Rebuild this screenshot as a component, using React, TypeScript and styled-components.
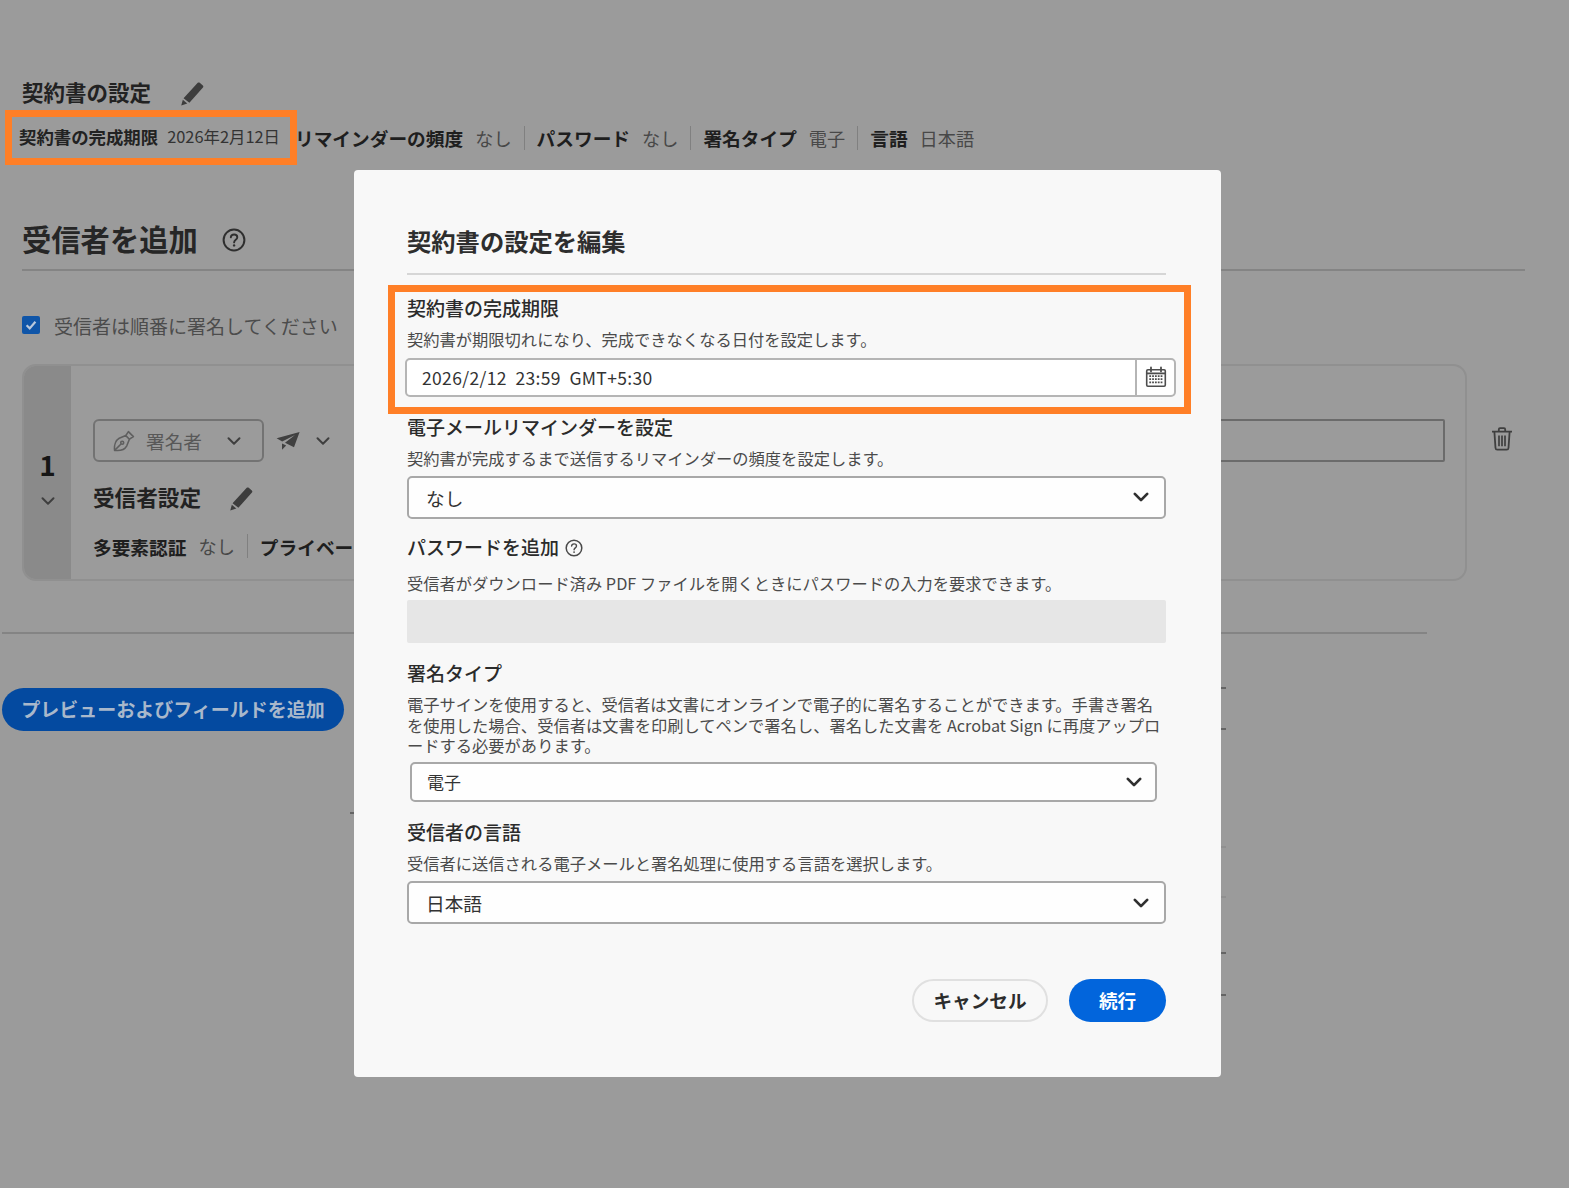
import React from "react";
import styled, { createGlobalStyle } from "styled-components";

const GlobalStyle = createGlobalStyle`
  html, body {
    margin: 0;
    padding: 0;
    background: #9b9b9b;
  }
  * {
    box-sizing: border-box;
  }
`;

const Page = styled.div`
  position: relative;
  width: 1569px;
  height: 1188px;
  overflow: hidden;
  padding-top: 79px;
  background: #9b9b9b;
  color: #1b1b1b;
  font-family: "Noto Sans CJK JP", "Noto Sans", sans-serif;
`;

/* ---------- dimmed page behind the dialog ---------- */

const TitleRow = styled.div`
  display: flex;
  align-items: center;
  height: 26px;
  margin-left: 22px;
  gap: 29px;
  svg {
    margin-top: 3px;
  }
`;
const SettingsTitle = styled.div`
  font-size: 21.5px;
  font-weight: 700;
  line-height: 26px;
  color: #222;
`;
const SummaryRow = styled.div`
  display: flex;
  align-items: center;
  height: 55px;
  margin: 5px 0 0 5px;
`;
const Highlight = styled.div`
  display: flex;
  align-items: center;
  width: 292px;
  height: 55px;
  margin-right: -2px;
  padding: 0 0 3px 7px;
  border: 7px solid #ff7f27;
  flex-shrink: 0;
`;
const HighlightKey = styled.span`
  font-size: 17.4px;
  font-weight: 700;
  color: #222;
  margin-right: 9px;
  white-space: nowrap;
`;
const HighlightValue = styled.span`
  font-size: 16.4px;
  color: #333;
  white-space: nowrap;
`;
const Pair = styled.div<{ $first?: boolean; $last?: boolean }>`
  display: flex;
  align-items: center;
  gap: 12px;
  padding: 0 12px 0 ${(p) => (p.$first ? 0 : 12)}px;
  height: 24px;
  border-right: 1px solid ${(p) => (p.$last ? "transparent" : "#808080")};
  white-space: nowrap;
`;
const PairKey = styled.span`
  font-size: 18.7px;
  font-weight: 700;
  color: #1e1e1e;
`;
const PairValue = styled.span`
  font-size: 18.2px;
  color: #484848;
`;
const SectionHead = styled.div`
  display: flex;
  align-items: center;
  gap: 24px;
  height: 44px;
  margin: 53px 0 0 22px;
`;
const SectionTitle = styled.h2`
  margin: 0;
  padding-bottom: 4px;
  font-size: 29.3px;
  font-weight: 700;
  color: #262626;
`;
const Rule = styled.div<{ $left: number; $width: number; $top: number }>`
  height: 2px;
  margin-top: ${(p) => p.$top}px;
  margin-left: ${(p) => p.$left}px;
  width: ${(p) => p.$width}px;
  background: #848484;
`;
const OrderRow = styled.label`
  display: flex;
  align-items: center;
  gap: 14px;
  margin: 35px 0 0 22px;
  height: 38px;
  font-size: 19px;
  color: #4c4c4c;
`;
const Check = styled.span`
  display: flex;
  align-items: center;
  justify-content: center;
  width: 18px;
  height: 18px;
  border-radius: 2px;
  background: #0f55a8;
`;
const RecipientRow = styled.div`
  display: flex;
  align-items: flex-start;
  margin: 20px 0 0 22px;
`;
const Card = styled.div`
  display: flex;
  width: 1445px;
  height: 217px;
  border: 2px solid #909090;
  border-radius: 14px;
  overflow: hidden;
`;
const NumberStrip = styled.div`
  display: flex;
  flex-direction: column;
  align-items: center;
  gap: 10px;
  width: 47px;
  padding-top: 79px;
  background: #8a8a8a;
  flex-shrink: 0;
`;
const StepNumber = styled.div`
  font-size: 28px;
  font-weight: 700;
  line-height: 38px;
  color: #161616;
`;
const CardBody = styled.div`
  flex: 1;
  padding: 53px 20px 0 22px;
`;
const RoleRow = styled.div`
  display: flex;
  align-items: center;
`;
const RoleSelect = styled.div`
  display: flex;
  align-items: center;
  width: 171px;
  height: 43px;
  padding: 0 20px 0 17px;
  border: 2px solid #737373;
  border-radius: 6px;
  font-size: 18.7px;
  color: #585858;
  flex-shrink: 0;
`;
const RoleLabel = styled.span`
  margin: 0 auto 0 11px;
`;
const DeliveryIcons = styled.div`
  display: flex;
  align-items: center;
  gap: 15px;
  margin-left: 12px;
  flex-shrink: 0;
`;
const EmailBox = styled.div`
  height: 43px;
  flex: 1;
  margin-left: 30px;
  border: 2px solid #6b6b6b;
  border-radius: 2px;
`;
const RecipientHead = styled.div`
  display: flex;
  align-items: center;
  gap: 28px;
  height: 32px;
  margin-top: 18px;
  svg {
    margin-top: 5px;
  }
`;
const RecipientTitle = styled.div`
  font-size: 21.6px;
  font-weight: 700;
  color: #222;
`;
const RecipientMeta = styled.div`
  display: flex;
  align-items: center;
  width: 261px;
  overflow: hidden;
  margin-top: 22px;
`;
const TrashBox = styled.div`
  margin: 63px 0 0 24px;
  line-height: 0;
`;
const PreviewButton = styled.button`
  display: block;
  width: 342px;
  height: 43px;
  margin: 54px 0 0 2px;
  padding: 0 0 3px;
  border: 0;
  border-radius: 22px;
  background: #044aa0;
  color: #a9b8cb;
  font: 700 19px "Noto Sans CJK JP", sans-serif;
`;
const Tick = styled.span<{ $x: number; $y: number; $faint?: boolean }>`
  position: absolute;
  left: ${(p) => p.$x}px;
  top: ${(p) => p.$y}px;
  width: 5px;
  height: 2px;
  background: ${(p) => (p.$faint ? "#909090" : "#656565")};
`;

/* ---------- dialog ---------- */

const Dialog = styled.div`
  position: absolute;
  left: 354px;
  top: 170px;
  width: 867px;
  height: 907px;
  padding: 53px 55px 0 53px;
  border-radius: 4px;
  background: #f8f8f8;
`;
const DialogTitle = styled.h1`
  margin: 0;
  height: 36px;
  font-size: 24.3px;
  font-weight: 700;
  line-height: 36px;
  color: #2e2e2e;
`;
const DialogRule = styled.div`
  height: 2px;
  margin-top: 14px;
  background: #d6d6d6;
`;
const FocusBox = styled.div`
  margin: 10px -25px 0 -19px;
  height: 129px;
  padding: 3px 8px 0 12px;
  border: 7px solid #ff7f27;
`;
const FieldLabel = styled.div<{ $top?: number }>`
  display: flex;
  align-items: center;
  gap: 6px;
  height: 26px;
  margin-top: ${(p) => p.$top ?? 0}px;
  font-size: 19px;
  font-weight: 500;
  line-height: 26px;
  color: #2b2b2b;
`;
const LabelHelp = styled.span`
  display: flex;
  margin: 3px 0 0 0;
`;
const FieldHelp = styled.div<{ $top?: number }>`
  margin-top: ${(p) => p.$top ?? 0}px;
  font-size: 16.27px;
  line-height: 20.5px;
  white-space: nowrap;
  color: #4b4b4b;
`;
const DateInput = styled.div`
  display: flex;
  align-items: stretch;
  height: 39px;
  margin: 8px 0 0 -2px;
  border: 2px solid #b5b5b5;
  border-radius: 5px;
  background: #fff;
`;
const DateText = styled.div`
  flex: 1;
  padding-left: 15px;
  font-size: 17.5px;
  line-height: 35px;
  letter-spacing: 0.35px;
  white-space: pre;
  color: #333;
`;
const CalendarCell = styled.div`
  display: flex;
  align-items: center;
  justify-content: center;
  width: 39px;
  border-left: 2px solid #b5b5b5;
`;
const Select = styled.div<{ $compact?: boolean; $top?: number }>`
  display: flex;
  align-items: center;
  justify-content: space-between;
  height: ${(p) => (p.$compact ? 40 : 43)}px;
  margin: ${(p) => p.$top ?? 6}px ${(p) => (p.$compact ? "9px 0 3px" : "0 0")};
  padding: 0 ${(p) => (p.$compact ? 12 : 14)}px 0 ${(p) => (p.$compact ? 15 : 17)}px;
  border: 2px solid #a8a8a8;
  border-radius: 5px;
  background: #fefefe;
  font-size: ${(p) => (p.$compact ? 17 : 18.7)}px;
  color: #333;
`;
const DisabledInput = styled.div`
  height: 43px;
  margin-top: 7px;
  border-radius: 2px;
  background: #e6e6e6;
`;
const DialogActions = styled.div`
  display: flex;
  justify-content: flex-end;
  gap: 21px;
  margin-top: 55px;
`;
const OutlineButton = styled.button`
  width: 136px;
  height: 43px;
  padding: 0 0 3px;
  border: 2px solid #e0e0e0;
  border-radius: 22px;
  background: #f8f8f8;
  color: #2c2c2c;
  font: 700 18.6px "Noto Sans CJK JP", sans-serif;
`;
const PrimaryButton = styled.button`
  width: 97px;
  height: 43px;
  padding: 0 0 3px;
  border: 0;
  border-radius: 22px;
  background: #0265dc;
  color: #fff;
  font: 700 18.6px "Noto Sans CJK JP", sans-serif;
`;

/* ---------- icons ---------- */

const Pencil = ({ color = "#3d3d3d" }: { color?: string }) => (
  <svg width="24" height="24" viewBox="0 0 23 23">
    <path d="M17 .8c.6-.5 1.3-.5 1.9 0l3 2.5c.6.5.6 1.3.1 1.9L9 20 3.4 15.6Z" fill={color} />
    <path d="M2.7 17 7 20.6 1.2 22.6Z" fill={color} />
  </svg>
);

const Chevron = ({ size = 16, color = "#3f3f3f", weight = 2 }: { size?: number; color?: string; weight?: number }) => (
  <svg width={size} height={size} viewBox="0 0 16 16" fill="none">
    <path d="M2.5 5.2 8 10.8l5.5-5.6" stroke={color} strokeWidth={weight} strokeLinecap="round" strokeLinejoin="round" />
  </svg>
);

const Help = ({ size = 24, color = "#2f2f2f" }: { size?: number; color?: string }) => (
  <svg width={size} height={size} viewBox="0 0 24 24" fill="none">
    <circle cx="12" cy="12" r="10.4" stroke={color} strokeWidth="2" />
    <path d="M8.8 9.4c.2-1.9 1.5-2.9 3.3-2.9 1.9 0 3.2 1.1 3.2 2.7 0 2.6-3.2 2.6-3.2 5.2" stroke={color} strokeWidth="1.9" strokeLinecap="round" />
    <circle cx="12.1" cy="17.4" r="1.2" fill={color} />
  </svg>
);

const Tickmark = () => (
  <svg width="14" height="14" viewBox="0 0 14 14" fill="none">
    <path d="M2.6 7.3 5.7 10.4 11.4 3.8" stroke="#b9c8dc" strokeWidth="2.2" />
  </svg>
);

const PenNib = () => (
  <svg width="23" height="23" viewBox="0 0 23 23" fill="none" stroke="#5f5f5f" strokeWidth="1.6" strokeLinejoin="round">
    <path d="M2.6 21.4C2 16.4 3.6 11.2 7.2 9.2L13.8 6.6l3.6 3.6-2.6 6.6c-2 3.6-7 5.2-12.2 4.6Z" />
    <path d="M2.6 21.4 9 15" />
    <circle cx="10.2" cy="13.8" r="1.5" />
    <path d="M13.8 6.6 16.4 2.6 21.4 7.6 17.4 10.2" />
  </svg>
);

const PaperPlane = () => (
  <svg width="24" height="20" viewBox="0 0 24 20">
    <path d="M23.6 1 .6 7.2l5.6 3.4L19 4 9 11.8l9 4.4Z" fill="#404040" />
    <path d="M6 12.4v6.4l4.2-4.4Z" fill="#404040" />
  </svg>
);

const Trash = () => (
  <svg width="22" height="24" viewBox="0 0 22 24" fill="none" stroke="#3f3f3f">
    <path d="M1 4.6h20M7.8 4.2V2.4c0-.7.5-1.2 1.2-1.2h4c.7 0 1.2.5 1.2 1.2v1.8" strokeWidth="1.8" />
    <path d="M3.4 5 4.5 21c.1 1 .8 1.7 1.8 1.7h9.4c1 0 1.7-.7 1.8-1.7L18.6 5" strokeWidth="1.8" />
    <path d="M8 8.4v10.8M11 8.4v10.8M14 8.4v10.8" strokeWidth="1.7" />
  </svg>
);

const Calendar = () => (
  <svg width="22" height="22" viewBox="0 0 22 22" fill="none">
    <rect x="1.7" y="3.7" width="18.6" height="16.6" rx="1.2" stroke="#4d4d4d" strokeWidth="1.6" />
    <path d="M2 7.4h18" stroke="#4d4d4d" strokeWidth="1.8" />
    <path d="M6 1.4v4M16 1.4v4" stroke="#4d4d4d" strokeWidth="1.8" strokeLinecap="round" />
    <path d="M4.3 10.2h13.4M4.3 13.2h13.4M4.3 16.4h13.4" stroke="#4d4d4d" strokeWidth="1.7" strokeDasharray="1.8 1.03" />
  </svg>
);

const ticks = [
  { x: 1221, y: 687 },
  { x: 1221, y: 728 },
  { x: 1221, y: 846, faint: true },
  { x: 1221, y: 896, faint: true },
  { x: 1221, y: 952 },
  { x: 1221, y: 994 },
  { x: 350, y: 812 },
];

const App = () => (
  <Page>
    <GlobalStyle />
    <TitleRow>
      <SettingsTitle>契約書の設定</SettingsTitle>
      <Pencil />
    </TitleRow>
    <SummaryRow>
      <Highlight>
        <HighlightKey>契約書の完成期限</HighlightKey>
        <HighlightValue>2026年2月12日</HighlightValue>
      </Highlight>
      <Pair $first>
        <PairKey>リマインダーの頻度</PairKey>
        <PairValue>なし</PairValue>
      </Pair>
      <Pair>
        <PairKey>パスワード</PairKey>
        <PairValue>なし</PairValue>
      </Pair>
      <Pair>
        <PairKey>署名タイプ</PairKey>
        <PairValue>電子</PairValue>
      </Pair>
      <Pair $last>
        <PairKey>言語</PairKey>
        <PairValue>日本語</PairValue>
      </Pair>
    </SummaryRow>
    <SectionHead>
      <SectionTitle>受信者を追加</SectionTitle>
      <Help />
    </SectionHead>
    <Rule $left={22} $width={1503} $top={7} />
    <OrderRow>
      <Check>
        <Tickmark />
      </Check>
      受信者は順番に署名してください
    </OrderRow>
    <RecipientRow>
      <Card>
        <NumberStrip>
          <StepNumber>1</StepNumber>
          <Chevron />
        </NumberStrip>
        <CardBody>
          <RoleRow>
            <RoleSelect>
              <PenNib />
              <RoleLabel>署名者</RoleLabel>
              <Chevron />
            </RoleSelect>
            <DeliveryIcons>
              <PaperPlane />
              <Chevron />
            </DeliveryIcons>
            <EmailBox />
          </RoleRow>
          <RecipientHead>
            <RecipientTitle>受信者設定</RecipientTitle>
            <Pencil />
          </RecipientHead>
          <RecipientMeta>
            <Pair $first>
              <PairKey>多要素認証</PairKey>
              <PairValue>なし</PairValue>
            </Pair>
            <Pair $last>
              <PairKey>プライベート</PairKey>
            </Pair>
          </RecipientMeta>
        </CardBody>
      </Card>
      <TrashBox>
        <Trash />
      </TrashBox>
    </RecipientRow>
    <Rule $left={2} $width={1425} $top={51} />
    <PreviewButton>プレビューおよびフィールドを追加</PreviewButton>
    {ticks.map((t) => (
      <Tick key={`${t.x}-${t.y}`} $x={t.x} $y={t.y} $faint={t.faint} />
    ))}
    <Dialog>
      <DialogTitle>契約書の設定を編集</DialogTitle>
      <DialogRule />
      <FocusBox>
        <FieldLabel>契約書の完成期限</FieldLabel>
        <FieldHelp $top={8}>契約書が期限切れになり、完成できなくなる日付を設定します。</FieldHelp>
        <DateInput>
          <DateText>{"2026/2/12  23:59  GMT+5:30"}</DateText>
          <CalendarCell>
            <Calendar />
          </CalendarCell>
        </DateInput>
      </FocusBox>
      <FieldLabel>電子メールリマインダーを設定</FieldLabel>
      <FieldHelp $top={8}>契約書が完成するまで送信するリマインダーの頻度を設定します。</FieldHelp>
      <Select $top={7}>
        なし
        <Chevron size={18} color="#2f2f2f" weight={2.4} />
      </Select>
      <FieldLabel $top={15}>
        パスワードを追加
        <LabelHelp>
          <Help size={18} color="#4a4a4a" />
        </LabelHelp>
      </FieldLabel>
      <FieldHelp $top={13}>受信者がダウンロード済み PDF ファイルを開くときにパスワードの入力を要求できます。</FieldHelp>
      <DisabledInput />
      <FieldLabel $top={17}>署名タイプ</FieldLabel>
      <FieldHelp $top={8}>
        電子サインを使用すると、受信者は文書にオンラインで電子的に署名することができます。手書き署名
        <br />
        を使用した場合、受信者は文書を印刷してペンで署名し、署名した文書を Acrobat Sign に再度アップロ
        <br />
        ードする必要があります。
      </FieldHelp>
      <Select $compact>
        電子
        <Chevron size={18} color="#2f2f2f" weight={2.4} />
      </Select>
      <FieldLabel $top={17}>受信者の言語</FieldLabel>
      <FieldHelp $top={8}>受信者に送信される電子メールと署名処理に使用する言語を選択します。</FieldHelp>
      <Select $top={8}>
        日本語
        <Chevron size={18} color="#2f2f2f" weight={2.4} />
      </Select>
      <DialogActions>
        <OutlineButton>キャンセル</OutlineButton>
        <PrimaryButton>続行</PrimaryButton>
      </DialogActions>
    </Dialog>
  </Page>
);

export default App;
